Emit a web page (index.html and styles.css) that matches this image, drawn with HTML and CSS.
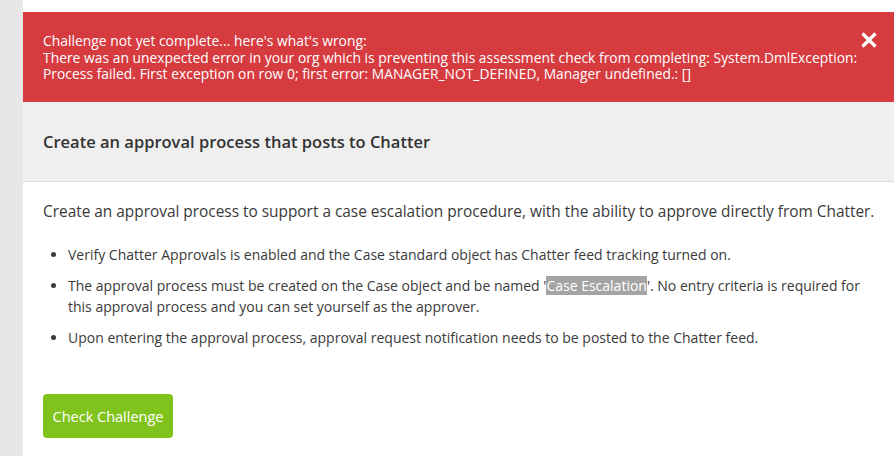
FILE: index.html
```html
<!DOCTYPE html>
<html>
<head>
<meta charset="utf-8">
<link rel="stylesheet" href="styles.css">
</head>
<body>
<div class="page">
  <aside class="side"></aside>
  <main class="panel">
    <div class="alert">
      <div class="alert-text">
        Challenge not yet complete... here's what's wrong:<br>
        There was an unexpected error in your org which is preventing this assessment check from completing: System.DmlException: Process failed. First exception on row 0; first error: MANAGER_NOT_DEFINED, Manager undefined.: []
      </div>
      <button class="close" aria-label="Close">
        <svg width="16" height="16" viewBox="0 0 16 16"><path d="M1.5 1.5L14.5 14.5M14.5 1.5L1.5 14.5" stroke="#fff" stroke-width="3.2" stroke-linecap="butt"/></svg>
      </button>
    </div>
    <div class="card-head">
      <h2 class="title">Create an approval process that posts to Chatter</h2>
    </div>
    <div class="card-body">
      <p class="intro">Create an approval process to support a case escalation procedure, with the ability to approve directly from Chatter.</p>
      <ul class="steps">
        <li>Verify Chatter Approvals is enabled and the Case standard object has Chatter feed tracking turned on.</li>
        <li>The approval process must be created on the Case object and be named '<span class="hl">Case Escalation</span>'. No entry criteria is required for this approval process and you can set yourself as the approver.</li>
        <li>Upon entering the approval process, approval request notification needs to be posted to the Chatter feed.</li>
      </ul>
      <button class="check">Check Challenge</button>
    </div>
  </main>
  <div class="edge"></div>
</div>
</body>
</html>
```
FILE: styles.css
```css
html, body {
  margin: 0;
  padding: 0;
  background: #ffffff;
  font-family: "Open Sans", "Liberation Sans", sans-serif;
  color: #3a3a3a;
}
.page {
  display: flex;
  height: 456px;
  overflow: hidden;
}
.side {
  width: 23px;
  flex: none;
  background: #e7e7e7;
}
.edge {
  width: 2px;
  flex: none;
  background: #ececec;
}
.panel {
  flex: 1;
  padding-top: 12px;
  background: #fff;
}
.alert {
  background: #d63b3f;
  color: #fff;
  height: 90px;
  box-sizing: border-box;
  padding: 21px 19px 0 20px;
  display: flex;
  justify-content: space-between;
  align-items: flex-start;
}
.alert-text {
  flex: none;
  font-size: 13.8px;
  line-height: 16.6px;
  letter-spacing: 0.04px;
  width: 818px;
}
.close {
  flex: none;
  background: none;
  border: 0;
  padding: 0;
  margin: -1px 0 0 0;
  width: 16px;
  height: 16px;
  cursor: pointer;
}
.close svg { display: block; }
.card-head {
  background: #efefef;
  height: 79px;
  border-bottom: 1px solid #dcdcdc;
  display: flex;
  align-items: center;
  padding: 0 20px;
}
.title {
  margin: 0;
  font-size: 16.5px;
  font-weight: 600;
  color: #333;
}
.card-body {
  padding: 20px 20px 0 20px;
}
.intro {
  margin: 0 0 22px 0;
  font-size: 15.4px;
  line-height: 20px;
  color: #3a3a3a;
}
.steps {
  margin: 0;
  padding: 0 0 0 25px;
  font-size: 14px;
  line-height: 21px;
  color: #3a3a3a;
}
.steps li {
  margin-bottom: 10px;
}
.hl {
  background: #a4a4a4;
  color: #fff;
}
.check {
  margin-top: 36px;
  background: #7fc31c;
  color: #fff;
  border: 0;
  border-radius: 4px;
  width: 130px;
  height: 44px;
  font-family: "Open Sans", "Liberation Sans", sans-serif;
  font-size: 14.5px;
  padding: 0;
}
```
